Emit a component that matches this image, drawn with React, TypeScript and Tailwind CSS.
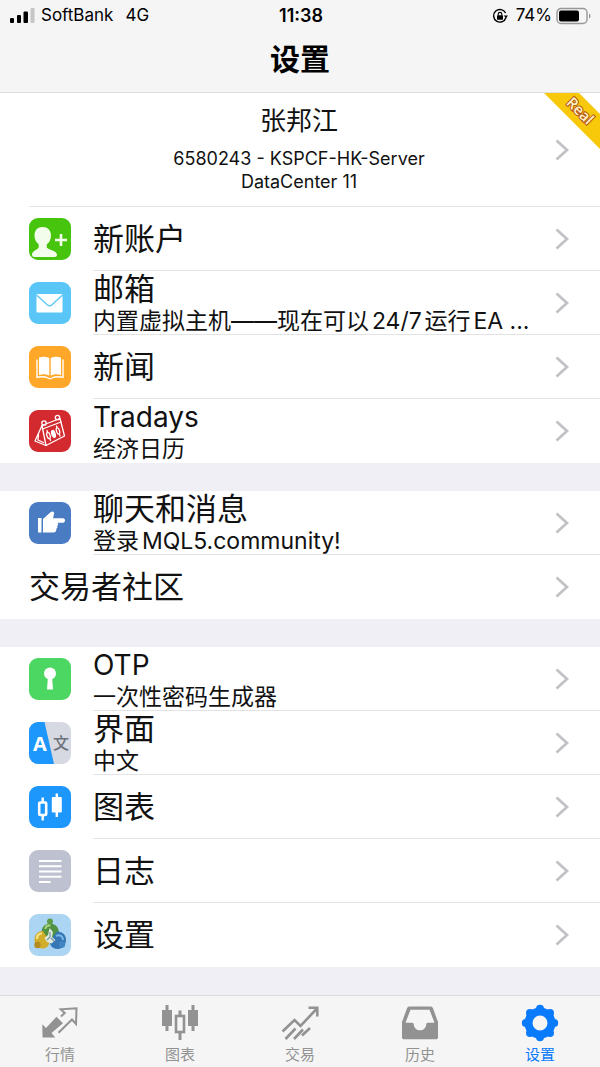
import type { ReactNode } from "react";

type Row = {
  title: string;
  latin?: boolean;
  subtitle?: string;
  icon?: ReactNode;
};

function Tile({ className, children }: { className: string; children: ReactNode }) {
  return (
    <svg
      viewBox="0 0 42 42"
      aria-hidden="true"
      className={`size-[42px] shrink-0 rounded-[9px] ${className}`}
    >
      {children}
    </svg>
  );
}

const accountRows: Row[] = [
  {
    title: "新账户",
    icon: (
      <Tile className="bg-[#46c40e]">
        <g fill="#f2fdec">
          <path d="M13.5 9c-4.8 0-8 3.4-8 8.2 0 4.3 1.800 7.300 4.200 9v3.300c0 1.600-6.700 3.300-6.700 7 0 1.700 1 2.500 2.500 2.500h20c1.600 0 2.500-.8 2.500-2.500 0-3.700-10.200-5.400-10.200-7v-3.300c2.500-1.700 4.200-4.700 4.200-9C22 12.400 18.500 9 13.500 9z" />
          <path d="M30.700 16h2.600v4.700H38v2.600h-4.700V28h-2.600v-4.700H26v-2.600h4.700z" />
        </g>
      </Tile>
    ),
  },
  {
    title: "邮箱",
    subtitle: "内置虚拟主机——现在可以24/7运行EA ...",
    icon: (
      <Tile className="bg-[#5ac6f8]">
        <rect x="7.5" y="12" width="26" height="18.5" rx="1" fill="#fff" />
        <path d="M7.5 13l10.800 9.800c1.500 1.300 3.200 1.300 4.700 0L33.500 13" fill="none" stroke="#5ac6f8" strokeWidth="1.3" />
      </Tile>
    ),
  },
  {
    title: "新闻",
    icon: (
      <Tile className="bg-[#fea728]">
        <path d="M10 11.500c4-1.200 7.500-1 10.300.8v17.500c-2.800-1.800-6.300-2-10.300-.8zM32 11.500c-4-1.200-7.500-1-10.300.8v17.500c2.800-1.800 6.300-2 10.300-.8z" fill="#fff" />
        <path d="M8 13.500v17.800c4.500-.8 8.300-.7 11 .7 1.200.8 2.800.8 4 0 2.700-1.400 6.500-1.500 11-.7V13.500" fill="none" stroke="#fff" strokeWidth="1.4" />
      </Tile>
    ),
  },
  {
    title: "Tradays",
    latin: true,
    subtitle: "经济日历",
    icon: (
      <Tile className="bg-[#d32a30]">
        <g fill="none" stroke="#fff" strokeWidth="1.3" strokeLinejoin="round" strokeLinecap="round">
          <path d="M13 15.500L31 8.500l4.500 17.500L17 35.500z" />
          <path d="M13 15.500L6 31l11 4.500M9.500 24l-.5 6 5.500 2.500M13.500 19L32 12" />
          <circle cx="15" cy="13" r="2.2" />
          <circle cx="28.5" cy="7.5" r="2.2" />
          <ellipse cx="19.5" cy="25.5" rx="1.6" ry="3.2" transform="rotate(-18 19.5 25.5)" />
          <ellipse cx="24.5" cy="24" rx="1.6" ry="3.6" transform="rotate(-18 24.5 24)" fill="#fff" />
          <ellipse cx="29" cy="21" rx="1.5" ry="3.2" transform="rotate(-18 29 21)" />
          <path d="M18 20.500l.5 1.500M21 29l.5 1.500M27.500 16l.5 1.500M30.500 24.500l.5 1.500" />
        </g>
      </Tile>
    ),
  },
];

const communityRows: Row[] = [
  {
    title: "聊天和消息",
    subtitle: "登录MQL5.community!",
    icon: (
      <Tile className="bg-[#4a7cc4]">
        <path
          d="M9 16h3.500v14.500H9zM14 17l7.800-7c1.700-1.300 3.600-.3 3.400 1.400L24 16.300h10c1.300 0 2 1 2 2.200s-.7 2.200-2 2.200h-5.500c1 1 .9 2.400-.4 3.200.7 1.200.3 2.300-.8 2.900.4 2.400-.8 3.700-3 3.700H14z"
          fill="#fff"
        />
      </Tile>
    ),
  },
  { title: "交易者社区" },
];

const appRows: Row[] = [
  {
    title: "OTP",
    latin: true,
    subtitle: "一次性密码生成器",
    icon: (
      <Tile className="bg-[#4cd763]">
        <circle cx="21" cy="15.5" r="6" fill="#fff" />
        <path d="M19 18h4l1 13.500h-6z" fill="#fff" />
      </Tile>
    ),
  },
  {
    title: "界面",
    subtitle: "中文",
    icon: (
      <Tile className="bg-[#d7d9e2]">
        <path d="M0 0h15.500L25 42H0z" fill="#1d97fc" />
        <text x="11" y="29" textAnchor="middle" fill="#fff" className="font-['Open_Sans',sans-serif] text-[20px] font-bold">
          A
        </text>
        <text x="32" y="27" textAnchor="middle" fill="#6b717c" className="font-['Noto_Sans_CJK_SC',sans-serif] text-[16px] font-medium">
          文
        </text>
      </Tile>
    ),
  },
  {
    title: "图表",
    icon: (
      <Tile className="bg-[#1d97fc]">
        <path d="M13.700 11.500v4.500M13.700 29v5.500M27.800 7.500v23.500" stroke="#fff" strokeWidth="2.4" />
        <rect x="10.200" y="16.5" width="7" height="12.5" rx="1" fill="none" stroke="#fff" strokeWidth="2.6" />
        <rect x="22.8" y="11" width="10" height="15.5" rx="1" fill="#fff" />
      </Tile>
    ),
  },
  {
    title: "日志",
    icon: (
      <Tile className="bg-[#bec1cf]">
        <path d="M10 11h22.500M10 16.200h22.500M10 21.500h22.500M10 26.700h22.500M10 32h11.500" stroke="#fff" strokeWidth="2" />
      </Tile>
    ),
  },
  {
    title: "设置",
    icon: (
      <Tile className="bg-[#abd5f2]">
        <circle cx="21" cy="7.5" r="3" fill="#5f9c46" />
        <path d="M12.500 19c0-6 3.500-9.500 8.500-9.500s9 3.500 9 10l-5 4h-8z" fill="#4f9140" />
        <path d="M16 15c1-3 3-4 5.500-3.500" fill="none" stroke="#a5d27c" strokeWidth="2" />
        <path d="M14 17c-6 0-8.500 4.500-8.500 9 0 5 3.500 8.500 8 8.500 4 0 6.500-2.500 7-7z" fill="#d0ad2b" />
        <path d="M8 25c0-3.500 2-5.500 5-5.500" fill="none" stroke="#f5e583" strokeWidth="2.2" />
        <path d="M28 17.500c6 0 9 4 9 8.500 0 5-3.500 9-8.500 9-4.500 0-7.500-3-8-7.500z" fill="#3676b4" />
        <path d="M27 22c4-2 7 .5 7 4" fill="none" stroke="#75b6e5" strokeWidth="2.2" />
        <circle cx="8.500" cy="31" r="3.2" fill="#b48b1e" />
        <circle cx="33" cy="30.5" r="3.2" fill="#4186c2" />
        <path d="M20.500 14l3.500 4-1 5 3.500 3-4 3.500-4.500-1.500-2.500-4 3.500-3z" fill="#dfe8df" />
        <path d="M21 18v5l-3 3M22 24l3 3" fill="none" stroke="#71949d" strokeWidth="1.2" />
      </Tile>
    ),
  },
];

const tabs = [
  {
    label: "行情",
    icon: (
      <>
        <path d="M2.300 22.300L6 26 16.500 14.700l6.500 6.500L11.500 31l3.700 4.500H2.500z" fill="currentColor" />
        <path d="M21 14.500l3.700-3.500-4-3.700 15.800-1L36 22l-4-4.500-13.500 13.300" fill="none" stroke="currentColor" strokeWidth="2" />
      </>
    ),
  },
  {
    label: "图表",
    icon: (
      <>
        <path d="M7 3v26M33 3v26M20 8.500V14M20 30v8" stroke="currentColor" strokeWidth="3" />
        <path d="M2 8h10v16H2zM28 8h10v16H28z" fill="currentColor" />
        <rect x="16" y="14" width="8" height="16" fill="none" stroke="currentColor" strokeWidth="2.6" />
      </>
    ),
  },
  {
    label: "交易",
    icon: (
      <g fill="none" stroke="currentColor" strokeWidth="2.6">
        <path d="M2.500 29.500l12-11.500 6 6L37 6.500M28.500 5.800h8.800v8.700" />
        <path d="M5.500 37l10-10.500M14 37l9-9.500M22 33.500l8-7.500" />
      </g>
    ),
  },
  {
    label: "历史",
    icon: (
      <path
        d="M9.500 4.500h21c1.200 0 2 .6 2.400 1.600L38 20v15.500c0 1-.7 1.700-1.700 1.700H3.700c-1 0-1.700-.7-1.700-1.700V20L7.100 6.100c.4-1 1.200-1.600 2.400-1.600zm1 3.200L5.500 20.700H12c1.200 0 1.600.6 1.800 2 .5 3.500 2.700 5.600 6.200 5.600s5.700-2.100 6.200-5.600c.2-1.400.6-2 1.800-2h6.500l-5-13z"
        fill="currentColor"
        fillRule="evenodd"
      />
    ),
  },
  {
    label: "设置",
    active: true,
    icon: (
      <>
        <circle cx="20" cy="21" r="11.5" fill="none" stroke="currentColor" strokeWidth="8" />
        <g fill="currentColor">
          <circle cx="20" cy="6.8" r="4" />
          <circle cx="30" cy="11" r="4" />
          <circle cx="34.200" cy="21" r="4" />
          <circle cx="30" cy="31" r="4" />
          <circle cx="20" cy="35.2" r="4" />
          <circle cx="10" cy="31" r="4" />
          <circle cx="5.8" cy="21" r="4" />
          <circle cx="10" cy="11" r="4" />
        </g>
      </>
    ),
  },
];

function Chevron() {
  return (
    <svg viewBox="0 0 14 22" aria-hidden="true" className="h-[22px] w-3.5 shrink-0">
      <path d="M1.500 1.500L12 11 1.500 20.500" fill="none" stroke="#c2c2c6" strokeWidth="2.8" />
    </svg>
  );
}

function SettingsRow({ title, latin, subtitle, icon }: Row) {
  return (
    <li className="group">
      <button className="flex h-16 w-full items-center pl-[29px] text-left">
        {icon && <span className="mr-[22px] flex">{icon}</span>}
        <span className="flex h-full min-w-0 flex-1 items-center border-b border-[#e3e3e5] pr-[31px] group-last:border-transparent">
          <span className="min-w-0 flex-1">
            <span className={`block truncate leading-9 ${latin ? "text-[28px]" : "text-[31px]"}`}>
              {title}
            </span>
            {subtitle && (
              <span className="block truncate text-[23px] leading-7 [text-autospace:normal]">
                {subtitle}
              </span>
            )}
          </span>
          <Chevron />
        </span>
      </button>
    </li>
  );
}

function Section({ rows }: { rows: Row[] }) {
  return (
    <ul className="bg-white">
      {rows.map((row) => (
        <SettingsRow key={row.title} {...row} />
      ))}
    </ul>
  );
}

function StatusBar() {
  return (
    <div className="grid h-8 grid-cols-3 items-center pr-2 pl-2.5 text-[17px]">
      <div className="flex items-center">
        <svg viewBox="0 0 25 16" aria-hidden="true" className="mr-1.5 h-4 w-[25px]">
          <rect x="0" y="10" width="4" height="5" rx="1" />
          <rect x="7" y="7" width="4" height="8" rx="1" />
          <rect x="13.5" y="3.5" width="4.5" height="11.5" rx="1" />
          <rect x="20.5" y="0" width="4" height="15" rx="1" fill="#c6c6c8" />
        </svg>
        <span>SoftBank</span>
        <span className="ml-3">4G</span>
      </div>
      <span className="text-center text-lg font-semibold">11:38</span>
      <div className="flex items-center justify-end">
        <svg viewBox="0 0 16 16" aria-hidden="true" className="mr-2 size-4">
          <path d="M13.600 5A6.300 6.300 0 1 0 14 9.500" fill="none" stroke="#000" strokeWidth="1.4" />
          <path d="M11.800 7.500h4.200L14 10.200z" />
          <rect x="5" y="7.2" width="6" height="4.500" rx=".6" />
          <path d="M6.200 7.500V6.200a1.800 1.800 0 0 1 3.600 0v1.300" fill="none" stroke="#000" strokeWidth="1.1" />
        </svg>
        <span>74%</span>
        <svg viewBox="0 0 36 18" aria-hidden="true" className="ml-1 h-[18px] w-9">
          <rect x="1" y="1.5" width="30" height="15" rx="4" fill="none" stroke="#98989a" strokeWidth="1.4" />
          <rect x="3" y="3.5" width="20" height="11" rx="2" />
          <path d="M33 6.500c2 .7 2 4.300 0 5z" fill="#98989a" />
        </svg>
      </div>
    </div>
  );
}

export default function App() {
  return (
    <div className="flex min-h-screen flex-col bg-[#f0eff6] font-['Inter','Noto_Sans_CJK_SC',sans-serif] text-[#111]">
      <header className="border-b border-[#dededf] bg-[#f5f5f5] text-black">
        <StatusBar />
        <h1 className="h-[60px] text-center text-[30px] leading-[54px] font-bold">设置</h1>
      </header>

      <main className="flex flex-1 flex-col gap-7 pb-7">
        <div>
          <div className="relative bg-white">
            <button className="flex w-full pl-[29px]">
              <span className="flex h-[114px] flex-1 items-center border-b border-[#e3e3e5] pr-[31px]">
                <span className="flex-1 pr-0.5 pl-4 text-center">
                  <span className="block text-[26px] leading-7">张邦江</span>
                  <span className="mt-3 block text-lg leading-[23px]">
                    6580243 - KSPCF-HK-Server
                    <br />
                    DataCenter 11
                  </span>
                </span>
                <Chevron />
              </span>
            </button>
            {/* account type ribbon */}
            <svg viewBox="0 0 56 56" className="pointer-events-none absolute top-0 right-0 size-14">
              <path d="M0 0h35l21 21v35z" fill="#f8c80a" />
              <text
                x="36"
                y="23"
                textAnchor="middle"
                transform="rotate(45 36 18)"
                fill="#fff3c4"
                stroke="#b5561c"
                strokeWidth="2"
                paintOrder="stroke"
                className="font-['Open_Sans',sans-serif] text-[15px] font-semibold"
              >
                Real
              </text>
            </svg>
          </div>
          <Section rows={accountRows} />
        </div>
        <Section rows={communityRows} />
        <Section rows={appRows} />
      </main>

      <nav className="grid h-[72px] grid-cols-5 border-t border-[#d9d9de] bg-[#f5f5f5]">
        {tabs.map((tab) => (
          <button
            key={tab.label}
            aria-current={tab.active ? "page" : undefined}
            className={`flex flex-col items-center pt-1.5 ${tab.active ? "text-[#0a7bfd]" : "text-[#929292]"}`}
          >
            <svg viewBox="0 0 40 40" aria-hidden="true" className="size-10">
              {tab.icon}
            </svg>
            <span className="mt-1 text-[15px] leading-[18px]">{tab.label}</span>
          </button>
        ))}
      </nav>
    </div>
  );
}
